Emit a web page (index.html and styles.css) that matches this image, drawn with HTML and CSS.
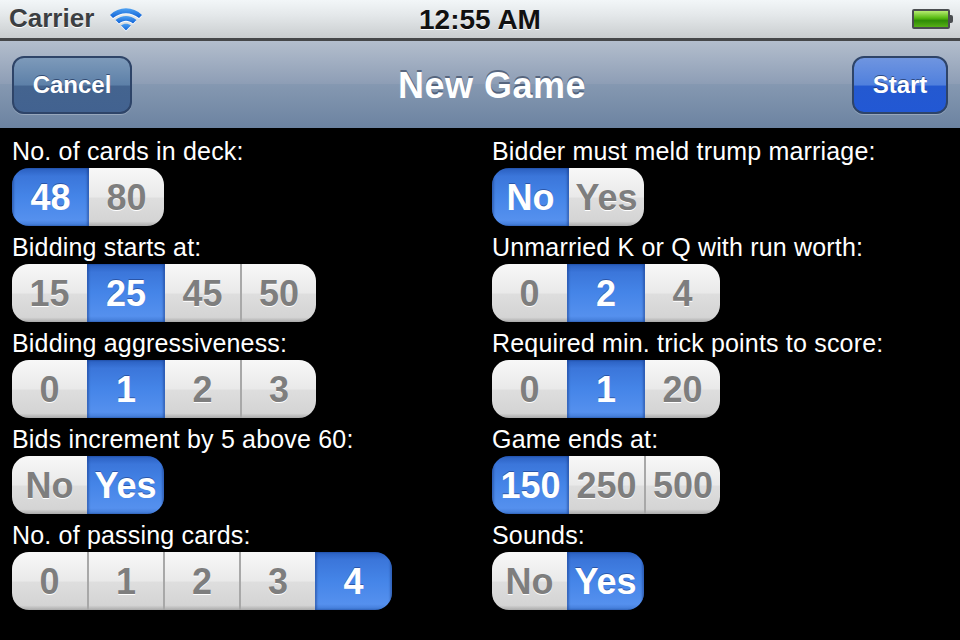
FILE: index.html
```html
<!DOCTYPE html>
<html>
<head>
<meta charset="utf-8">
<title>New Game</title>
<link rel="stylesheet" href="styles.css">
</head>
<body>
<div class="status">
    <div class="status-left">
        <span class="carrier">Carrier</span>
        <svg class="wifi" width="34" height="26" viewBox="0 0 34 26">
            <defs>
                <linearGradient id="wifiblue" x1="0" y1="0" x2="0" y2="1">
                    <stop offset="0" stop-color="#4fa2f2"/>
                    <stop offset="1" stop-color="#0f62d6"/>
                </linearGradient>
            </defs>
            <path d="M1 9 C10 0 24 0 33 9 L30 12 C22 5.500 12 5.500 4 12 Z" fill="url(#wifiblue)"/>
            <path d="M6.500 14 C13 8.500 21 8.500 27.500 14 L24 17.500 C19.500 13.800 14.500 13.800 10 17.500 Z" fill="url(#wifiblue)"/>
            <path d="M12 19.500 C15 17 19 17 22 19.500 L17 24.500 Z" fill="url(#wifiblue)"/>
        </svg>
    </div>
    <div class="clock">12:55 AM</div>
    <div class="battery"><div class="battery-fill"></div><div class="battery-tip"></div></div>
</div>
<div class="navbar">
    <button class="nav-btn cancel">Cancel</button>
    <h1>New Game</h1>
    <button class="nav-btn start">Start</button>
</div>
<div class="options">
    <div class="option">
        <div class="label">No. of cards in deck:</div>
        <div class="seg"><span class="on">48</span><span>80</span></div>
    </div>
    <div class="option">
        <div class="label">Bidder must meld trump marriage:</div>
        <div class="seg"><span class="on">No</span><span>Yes</span></div>
    </div>
    <div class="option">
        <div class="label">Bidding starts at:</div>
        <div class="seg"><span>15</span><span class="on">25</span><span>45</span><span>50</span></div>
    </div>
    <div class="option">
        <div class="label">Unmarried K or Q with run worth:</div>
        <div class="seg"><span>0</span><span class="on">2</span><span>4</span></div>
    </div>
    <div class="option">
        <div class="label">Bidding aggressiveness:</div>
        <div class="seg"><span>0</span><span class="on">1</span><span>2</span><span>3</span></div>
    </div>
    <div class="option">
        <div class="label">Required min. trick points to score:</div>
        <div class="seg"><span>0</span><span class="on">1</span><span>20</span></div>
    </div>
    <div class="option">
        <div class="label">Bids increment by 5 above 60:</div>
        <div class="seg"><span>No</span><span class="on">Yes</span></div>
    </div>
    <div class="option">
        <div class="label">Game ends at:</div>
        <div class="seg"><span class="on">150</span><span>250</span><span>500</span></div>
    </div>
    <div class="option">
        <div class="label">No. of passing cards:</div>
        <div class="seg"><span>0</span><span>1</span><span>2</span><span>3</span><span class="on">4</span></div>
    </div>
    <div class="option">
        <div class="label">Sounds:</div>
        <div class="seg"><span>No</span><span class="on">Yes</span></div>
    </div>
</div>
</body>
</html>
```

FILE: styles.css
```css
* {
    box-sizing: border-box;
}

html, body {
    margin: 0;
    padding: 0;
}

body {
    width: 960px;
    height: 640px;
    overflow: hidden;
    background: #000;
    font-family: "Liberation Sans", Arial, sans-serif;
}

/* status bar */
.status {
    height: 41px;
    display: flex;
    align-items: center;
    justify-content: space-between;
    padding: 0 7px 2px 9px;
    position: relative;
    background: linear-gradient(#f2f6f8, #e4e8ea 40%, #c9cdcf);
    border-bottom: 3px solid #454749;
}

.status-left {
    display: flex;
    align-items: center;
    gap: 15px;
}

.carrier {
    font-size: 26px;
    font-weight: bold;
    color: #3c3f42;
    text-shadow: 0 1px 0 #fff;
}

.wifi {
    margin-top: 2px;
    filter: drop-shadow(0 1px 0 #fff);
}

.clock {
    position: absolute;
    left: 0;
    right: 0;
    top: 4px;
    text-align: center;
    font-size: 28px;
    font-weight: bold;
    color: #111;
    text-shadow: 0 1px 0 #fff;
}

.battery {
    display: flex;
    align-items: center;
    margin-top: 2px;
}

.battery-fill {
    width: 38px;
    height: 20px;
    border: 2px solid #4a4d50;
    border-radius: 2px;
    background: linear-gradient(#b6ec70, #55b810 45%, #2f8c06 60%, #56b016);
}

.battery-tip {
    width: 3px;
    height: 8px;
    background: #4a4d50;
    border-radius: 0 2px 2px 0;
}

/* nav bar */
.navbar {
    height: 87px;
    display: flex;
    align-items: center;
    justify-content: space-between;
    padding: 1px 12px 0 12px;
    position: relative;
    background: linear-gradient(#b3becd, #8d9db5 50%, #8598b1 50%, #6c83a1);
}

.navbar h1 {
    position: absolute;
    left: 24px;
    right: 0;
    top: 0;
    margin: 0;
    line-height: 90px;
    text-align: center;
    font-size: 36px;
    font-weight: bold;
    letter-spacing: .5px;
    color: #fff;
    text-shadow: 0 -2px 0 rgba(60, 75, 100, .7);
}

.nav-btn {
    height: 58px;
    padding: 0;
    font: bold 24px "Liberation Sans", Arial, sans-serif;
    color: #fff;
    border: 2px solid #2e4468;
    border-radius: 12px;
    text-shadow: 0 -1px 0 rgba(30, 50, 90, .7);
    box-shadow: 0 1px 0 rgba(255, 255, 255, .25);
}

.cancel {
    width: 120px;
    background: linear-gradient(#7d9aba, #5d80a8 50%, #44648f 52%, #426290);
}

.start {
    width: 96px;
    background: linear-gradient(#6f95e0, #5080dd 50%, #2459d0 52%, #2258d4);
}

/* options */
.options {
    display: grid;
    grid-template-columns: 480px 480px;
    grid-auto-rows: 96px;
    padding-top: 1px;
}

.option {
    padding-left: 12px;
}

.label {
    height: 39px;
    line-height: 44px;
    font-size: 25px;
    letter-spacing: .18px;
    color: #fff;
}

.seg {
    display: inline-flex;
    height: 58px;
    border-radius: 17px;
    overflow: hidden;
}

.seg span {
    width: 76px;
    height: 58px;
    text-align: center;
    line-height: 60px;
    font-size: 36px;
    font-weight: bold;
    color: #7e7e7e;
    text-shadow: 0 1px 0 #fff;
    background: linear-gradient(#f8f8f8, #e9e9e9 50%, #dedede 52%, #d4d4d4 92%, #aaa);
    border-left: 2px solid #a8a8a8;
}

.seg span:first-child {
    width: 75px;
    border-left: 0;
}

.seg span.on {
    width: 78px;
    color: #fff;
    text-shadow: 0 -1px 0 rgba(30, 60, 130, .6);
    border-left: 0;
    background: linear-gradient(#2a5fc0, #3b76da 14%, #4585e8 50%, #5590ee 90%, #3f78d4);
    box-shadow: inset 2px 0 2px rgba(20, 50, 120, .4), inset -2px 0 2px rgba(20, 50, 120, .4);
}

.seg span.on:first-child,
.seg span.on:last-child {
    width: 77px;
}

.seg span.on + span {
    width: 75px;
    border-left: 0;
}
```
